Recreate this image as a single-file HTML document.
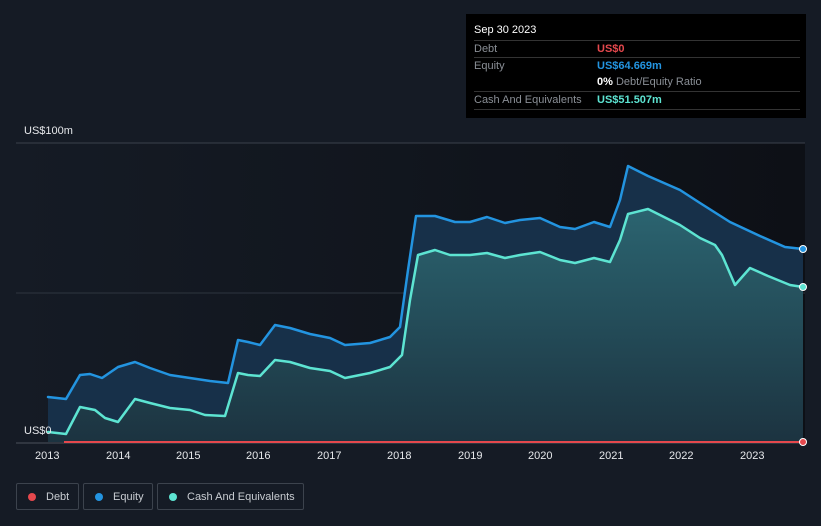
<!DOCTYPE html>
<html><head><style>
body{margin:0;width:821px;height:526px;background:#151b25;font-family:"Liberation Sans",sans-serif;overflow:hidden;position:relative}
.tt{position:absolute;left:466px;top:14px;width:340px;height:104px;background:#000;color:#fff;font-size:11px}
.tt .r{position:absolute;left:8px;right:6px;height:17px;border-top:1px solid #333;line-height:17px}
.g{color:#8a8f96}
.leg{position:absolute;top:483px;height:27px;border:1px solid #3c434d;border-radius:2px;color:#c8ccd1;font-size:11px;line-height:27px;box-sizing:border-box}
.dot{display:inline-block;width:8px;height:8px;border-radius:50%;margin:0 10px 0 11px;vertical-align:-0.5px}
.ax{position:absolute;top:450px;color:#e6e8eb;font-size:11px}
</style></head><body>
<svg width="821" height="526" style="position:absolute;left:0;top:0">
<defs><linearGradient id="c" x1="0" y1="0" x2="0" y2="1"><stop offset="0" stop-color="#2b6470"/><stop offset="1" stop-color="#1c3340"/></linearGradient>
<linearGradient id="bg" x1="0" y1="0" x2="1" y2="0"><stop offset="0" stop-color="#151b25"/><stop offset="1" stop-color="#0d1016"/></linearGradient></defs>
<rect x="16" y="143" width="789" height="299" fill="url(#bg)"/>
<line x1="16" y1="143" x2="805" y2="143" stroke="#3a414c"/>
<line x1="16" y1="293" x2="805" y2="293" stroke="#2e353f"/>
<path d="M48,397 L66,399 L80,375 L90,374 L102,378 L118,367 L135,362 L150,368 L170,375 L190,378 L210,381 L228,383 L238,340 L248,342 L260,345 L275,325 L290,328 L310,334 L330,338 L345,345 L370,343 L390,337 L400,327 L408,270 L416,216 L435,216 L455,222 L470,222 L487,217 L505,223 L520,220 L540,218 L560,227 L575,229 L594,222 L610,227 L620,200 L628,166 L648,176 L680,190 L700,203 L730,222 L760,236 L785,247 L803,249 L803,442 L48,442Z" fill="#173049"/>
<path d="M48,432 L66,434 L80,407 L95,410 L105,418 L118,422 L135,399 L150,403 L170,408 L190,410 L205,415 L225,416 L238,373 L248,375 L260,376 L275,360 L290,362 L310,368 L330,371 L345,378 L370,373 L390,367 L402,355 L410,300 L418,255 L435,250 L450,255 L470,255 L487,253 L505,258 L520,255 L540,252 L560,260 L575,263 L594,258 L610,262 L620,240 L628,214 L648,209 L680,225 L700,238 L715,245 L722,255 L735,285 L750,268 L768,276 L790,285 L803,287 L803,442 L48,442Z" fill="url(#c)"/>
<path d="M48,397 L66,399 L80,375 L90,374 L102,378 L118,367 L135,362 L150,368 L170,375 L190,378 L210,381 L228,383 L238,340 L248,342 L260,345 L275,325 L290,328 L310,334 L330,338 L345,345 L370,343 L390,337 L400,327 L408,270 L416,216 L435,216 L455,222 L470,222 L487,217 L505,223 L520,220 L540,218 L560,227 L575,229 L594,222 L610,227 L620,200 L628,166 L648,176 L680,190 L700,203 L730,222 L760,236 L785,247 L803,249" fill="none" stroke="#2394e0" stroke-width="2.5" stroke-linejoin="round" stroke-linecap="round"/>
<path d="M48,432 L66,434 L80,407 L95,410 L105,418 L118,422 L135,399 L150,403 L170,408 L190,410 L205,415 L225,416 L238,373 L248,375 L260,376 L275,360 L290,362 L310,368 L330,371 L345,378 L370,373 L390,367 L402,355 L410,300 L418,255 L435,250 L450,255 L470,255 L487,253 L505,258 L520,255 L540,252 L560,260 L575,263 L594,258 L610,262 L620,240 L628,214 L648,209 L680,225 L700,238 L715,245 L722,255 L735,285 L750,268 L768,276 L790,285 L803,287" fill="none" stroke="#5de4d2" stroke-width="2.5" stroke-linejoin="round" stroke-linecap="round"/>
<line x1="16" y1="443" x2="805" y2="443" stroke="#4a515b"/>
<line x1="64" y1="442" x2="803" y2="442" stroke="#e5484d" stroke-width="2"/>
<circle cx="803" cy="249" r="3.5" fill="#2394e0" stroke="#fff"/>
<circle cx="803" cy="287" r="3.5" fill="#5de4d2" stroke="#fff"/>
<circle cx="803" cy="442" r="3.5" fill="#e5484d" stroke="#fff"/>
</svg>
<div style="position:absolute;left:24px;top:125px;color:#e6e8eb;font-size:11px">US$100m</div>
<div style="position:absolute;left:24px;top:425px;color:#e6e8eb;font-size:11px">US$0</div>
<div class="ax" style="left:35px">2013</div><div class="ax" style="left:106px">2014</div><div class="ax" style="left:176px">2015</div><div class="ax" style="left:246px">2016</div><div class="ax" style="left:317px">2017</div><div class="ax" style="left:387px">2018</div><div class="ax" style="left:458px">2019</div><div class="ax" style="left:528px">2020</div><div class="ax" style="left:599px">2021</div><div class="ax" style="left:669px">2022</div><div class="ax" style="left:740px">2023</div>
<div class="tt">
<div style="position:absolute;left:8px;top:10px">Sep 30 2023</div>
<div class="r" style="top:26px"><span class="g">Debt</span><span style="position:absolute;left:123px;color:#e5484d;font-weight:bold">US$0</span></div>
<div class="r" style="top:43px"><span class="g">Equity</span><span style="position:absolute;left:123px;color:#2394e0;font-weight:bold">US$64.669m</span></div>
<div class="r" style="top:60px;border:none"><span style="position:absolute;left:123px"><b>0%</b> <span class="g">Debt/Equity Ratio</span></span></div>
<div class="r" style="top:77px"><span class="g">Cash And Equivalents</span><span style="position:absolute;left:123px;color:#5de4d2;font-weight:bold">US$51.507m</span></div>
<div class="r" style="top:95px;height:0"></div>
</div>
<div class="leg" style="left:16px;width:63px"><span class="dot" style="background:#e5484d"></span>Debt</div>
<div class="leg" style="left:83px;width:70px"><span class="dot" style="background:#2394e0"></span>Equity</div>
<div class="leg" style="left:157px;width:147px"><span class="dot" style="background:#5de4d2"></span>Cash And Equivalents</div>
</body></html>
